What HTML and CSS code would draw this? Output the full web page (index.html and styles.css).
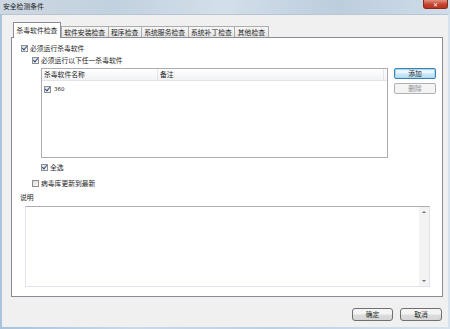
FILE: index.html
```html
<!DOCTYPE html>
<html lang="zh-CN">
  <head>
    <meta charset="UTF-8" />
    <title>安全检测条件</title>
    <link rel="stylesheet" href="styles.css">
  </head>
  <body>
    <div class="window">
      <div class="titlebar">
        <span class="title">安全检测条件</span>
        <span class="close">&#x2715;</span>
      </div>

      <div class="client">
        <div class="tabs">
          <div class="tab active">杀毒软件检查</div>
          <div class="tab">软件安装检查</div>
          <div class="tab">程序检查</div>
          <div class="tab">系统服务检查</div>
          <div class="tab">系统补丁检查</div>
          <div class="tab">其他检查</div>
        </div>

        <div class="panel">
          <label class="check row-first"><span class="box on"></span>必须运行杀毒软件</label>
          <label class="check indent1"><span class="box on"></span>必须运行以下任一杀毒软件</label>

          <div class="list-area">
            <div class="list">
              <div class="list-head">
                <span class="col-name">杀毒软件名称</span>
                <span class="col-note">备注</span>
                <span class="col-end"></span>
              </div>
              <div class="list-row">
                <span class="box on"></span>360
              </div>
            </div>
            <div class="side-buttons">
              <button class="btn btn-default">添加</button>
              <button class="btn" disabled>删除</button>
            </div>
          </div>

          <label class="check indent2 row-all"><span class="box on"></span>全选</label>
          <label class="check indent1 row-update"><span class="box"></span>病毒库更新到最新</label>

          <div class="desc-label">说明</div>
          <div class="memo">
            <div class="memo-text"></div>
            <div class="scrollbar">
              <span class="arrow up"></span>
              <span class="arrow down"></span>
            </div>
          </div>
        </div>

        <div class="footer">
          <button class="btn btn-dlg">确定</button>
          <button class="btn btn-dlg">取消</button>
        </div>
      </div>
    </div>
  </body>
</html>
```

FILE: styles.css
```css
body {
  margin: 0;
  font-family: "Noto Sans CJK SC", "DejaVu Sans", sans-serif;
  font-size: 6.8px;
  color: #1e1e1e;
}
.window {
  width: 450px;
  height: 329px;
  display: flex;
  flex-direction: column;
  background: linear-gradient(90deg, #a9c3dc 0%, #c9d9e8 30%, #bdd0e2 60%, #d6e3ef 100%);
}
.titlebar {
  height: 14px;
  position: relative;
  background: linear-gradient(90deg, #cdd8e2 0%, #c2d1df 25%, #d3dfea 50%, #bccddd 75%, #cfdde9 100%);
}
.title {
  position: absolute;
  left: 3px;
  top: 1px;
  line-height: 10px;
  color: #1a1a1a;
}
.close {
  position: absolute;
  right: 2px;
  top: 0;
  width: 25px;
  height: 9px;
  line-height: 9px;
  text-align: center;
  font-size: 6px;
  font-weight: bold;
  color: #fff;
  background: linear-gradient(#e1907f, #c5422f 55%, #b8341f);
  border: 1px solid #8a2a1c;
  border-top: none;
  border-radius: 0 0 3px 3px;
  box-sizing: border-box;
}
.client {
  flex: 1;
  margin: 0 2px 2px;
  padding: 7px 5px 0 9px;
  background: #f0f0f0;
  border-top: 1px solid #b8c6d4;
  box-sizing: border-box;
}
.tabs {
  display: flex;
  align-items: flex-end;
  height: 15px;
  padding-left: 2px;
}
.tab {
  height: 11px;
  line-height: 10px;
  padding: 0 2.5px;
  margin-right: -1px;
  border: 1px solid #acacac;
  border-bottom: none;
  background: linear-gradient(#f7f7f7, #e4e4e4);
  box-sizing: border-box;
  white-space: nowrap;
}
.tab.active {
  height: 16px;
  line-height: 14px;
  margin-bottom: -1px;
  margin-right: 0;
  background: #fff;
  border-color: #898c95;
  position: relative;
  z-index: 1;
}
.panel {
  height: 260px;
  border: 1px solid #898c95;
  background: #fff;
  padding: 0 0 0 9px;
  box-sizing: border-box;
}
.check {
  display: flex;
  align-items: center;
  height: 12px;
  line-height: 12px;
  white-space: nowrap;
}
.box {
  width: 7px;
  height: 7px;
  margin-right: 2px;
  border: 1px solid #8e8f8f;
  background: linear-gradient(135deg, #dcdcdc, #fbfbfb);
  box-sizing: border-box;
  position: relative;
  flex: none;
}
.box.on::after {
  content: "";
  position: absolute;
  left: 1px;
  top: -1px;
  width: 2px;
  height: 4px;
  border: solid #2b4c8c;
  border-width: 0 1.2px 1.2px 0;
  transform: rotate(40deg);
}
.row-first {
  margin-top: 4px;
}
.indent1 {
  margin-left: 11px;
}
.indent2 {
  margin-left: 20px;
}
.list-area {
  display: flex;
  margin: 2px 0 0 20px;
}
.list {
  width: 347px;
  height: 90px;
  border: 1px solid #abadb3;
  box-sizing: border-box;
}
.list-head {
  display: flex;
  height: 12px;
  line-height: 11px;
  background: linear-gradient(#ffffff, #f1f3f6);
  border-bottom: 1px solid #e2e4e8;
  box-sizing: border-box;
}
.col-name {
  width: 113px;
  padding-left: 2px;
  border-right: 1px solid #e2e4e8;
}
.col-note {
  flex: 1;
  padding-left: 2px;
  border-right: 1px solid #e2e4e8;
}
.col-end {
  width: 3px;
}
.list-row {
  display: flex;
  align-items: center;
  height: 12px;
  margin-top: 2px;
  padding-left: 2px;
  font-family: "DejaVu Sans", sans-serif;
  font-size: 5.5px;
}
.list-row .box {
  margin-right: 3px;
}
.side-buttons {
  display: flex;
  flex-direction: column;
  gap: 4px;
  margin-left: 6px;
}
.btn {
  font: inherit;
  width: 42px;
  height: 11px;
  padding: 0;
  line-height: 9px;
  color: #1e1e1e;
  border: 1px solid #707070;
  border-radius: 2px;
  background: linear-gradient(#f4f4f4 45%, #dcdcdc 55%, #d5d5d5);
  box-sizing: border-box;
}
.btn-default {
  border-color: #3c7fb1;
  background: linear-gradient(#eaf6fd 45%, #c7e5f7 55%, #bee0f4);
  box-shadow: inset 0 0 0 1px #a7d9f5;
}
.btn:disabled {
  color: #8d8d8d;
  border-color: #adb2b5;
  background: #f4f4f4;
}
.row-all {
  margin-top: 3px;
}
.row-update {
  margin-top: 4px;
}
.desc-label {
  height: 12px;
  line-height: 12px;
  margin: 2px 0 0 -1px;
}
.memo {
  display: flex;
  width: 405px;
  height: 81px;
  margin: 3px 0 0 4px;
  border: 1px solid #e2e3ea;
  border-top-color: #abadb3;
  box-sizing: border-box;
}
.memo-text {
  flex: 1;
}
.scrollbar {
  width: 10px;
  display: flex;
  flex-direction: column;
  justify-content: space-between;
  align-items: center;
  padding: 4px 0;
  background: #f3f3f3;
  box-sizing: border-box;
}
.arrow {
  width: 0;
  height: 0;
  border-left: 2px solid transparent;
  border-right: 2px solid transparent;
}
.arrow.up {
  border-bottom: 2px solid #6d6d6d;
}
.arrow.down {
  border-top: 2px solid #6d6d6d;
}
.footer {
  display: flex;
  justify-content: flex-end;
  gap: 7px;
  margin: 11px 1px 0 0;
}
.btn-dlg {
  height: 13px;
  line-height: 11px;
  border-radius: 3px;
}
.btn-dlg:first-child {
  width: 41px;
}
```
